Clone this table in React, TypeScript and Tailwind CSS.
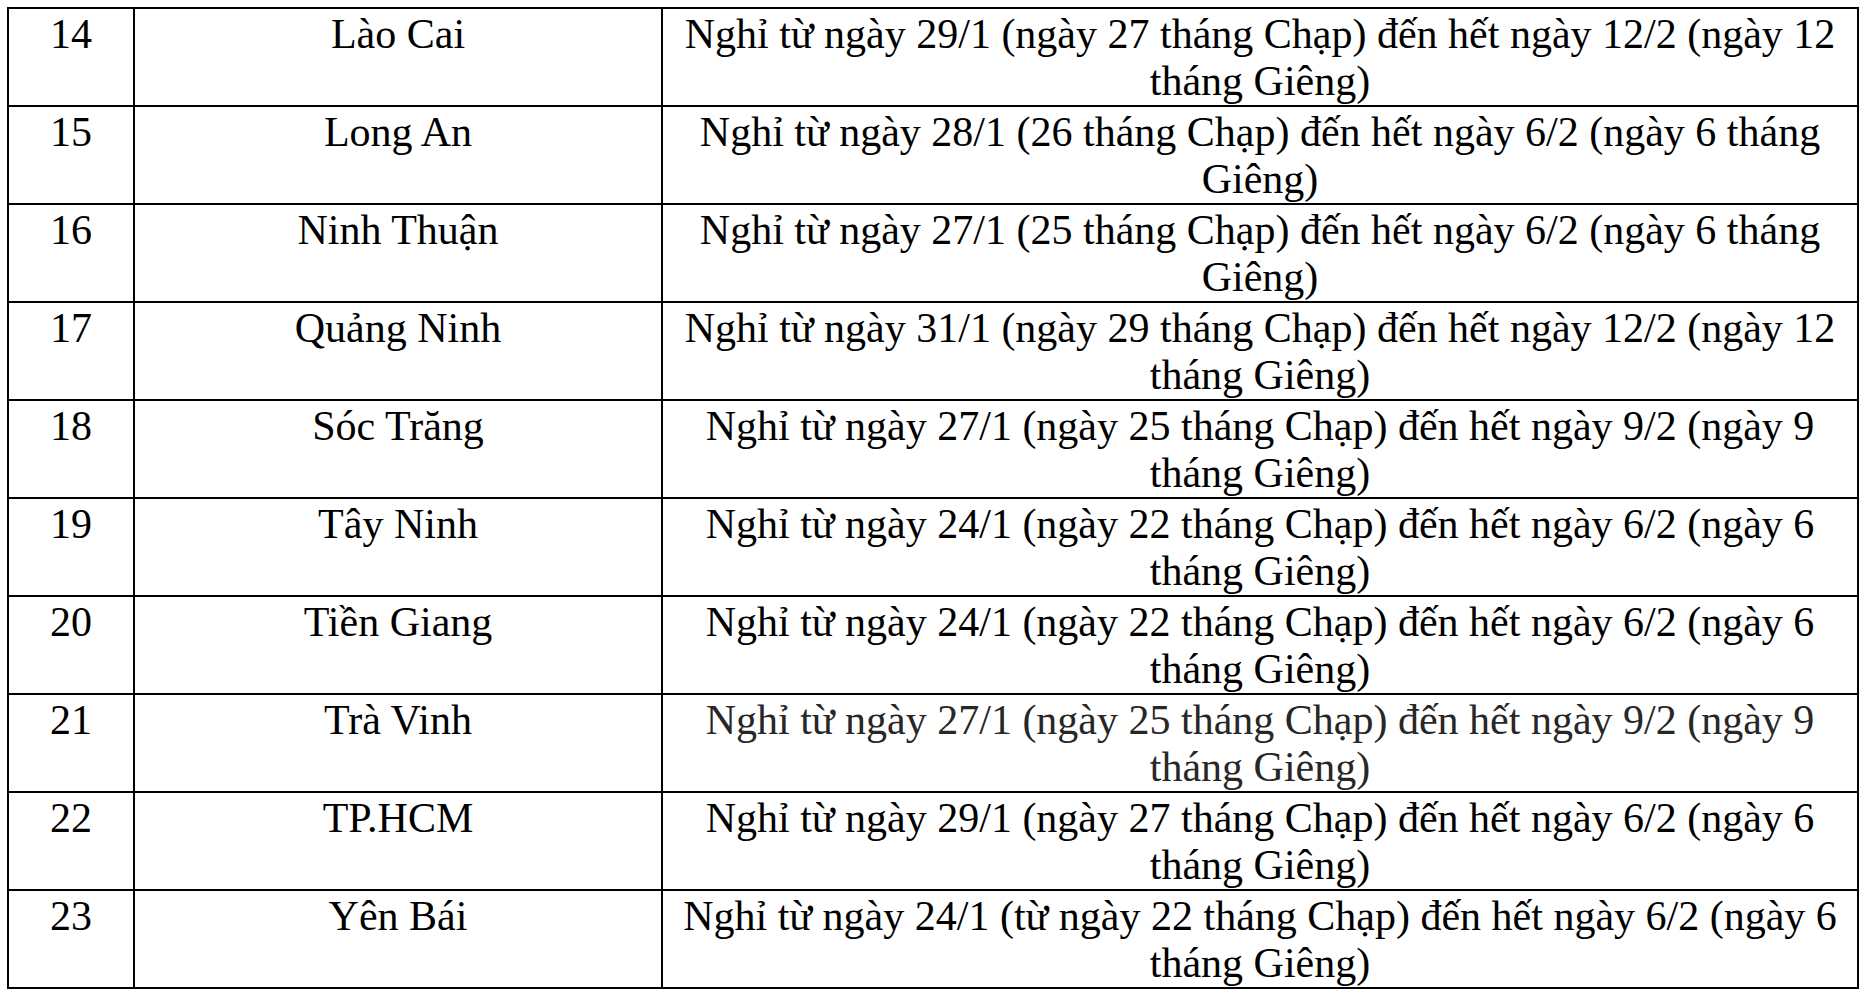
const rows: { no: number; province: string; lines: [string, string]; muted?: boolean }[] = [
  { no: 14, province: "Lào Cai", lines: ["Nghỉ từ ngày 29/1 (ngày 27 tháng Chạp) đến hết ngày 12/2 (ngày 12", "tháng Giêng)"] },
  { no: 15, province: "Long An", lines: ["Nghỉ từ ngày 28/1 (26 tháng Chạp) đến hết ngày 6/2 (ngày 6 tháng", "Giêng)"] },
  { no: 16, province: "Ninh Thuận", lines: ["Nghỉ từ ngày 27/1 (25 tháng Chạp) đến hết ngày 6/2 (ngày 6 tháng", "Giêng)"] },
  { no: 17, province: "Quảng Ninh", lines: ["Nghỉ từ ngày 31/1 (ngày 29 tháng Chạp) đến hết ngày 12/2 (ngày 12", "tháng Giêng)"] },
  { no: 18, province: "Sóc Trăng", lines: ["Nghỉ từ ngày 27/1 (ngày 25 tháng Chạp) đến hết ngày 9/2 (ngày 9", "tháng Giêng)"] },
  { no: 19, province: "Tây Ninh", lines: ["Nghỉ từ ngày 24/1 (ngày 22 tháng Chạp) đến hết ngày 6/2 (ngày 6", "tháng Giêng)"] },
  { no: 20, province: "Tiền Giang", lines: ["Nghỉ từ ngày 24/1 (ngày 22 tháng Chạp) đến hết ngày 6/2 (ngày 6", "tháng Giêng)"] },
  { no: 21, province: "Trà Vinh", lines: ["Nghỉ từ ngày 27/1 (ngày 25 tháng Chạp) đến hết ngày 9/2 (ngày 9", "tháng Giêng)"], muted: true },
  { no: 22, province: "TP.HCM", lines: ["Nghỉ từ ngày 29/1 (ngày 27 tháng Chạp) đến hết ngày 6/2 (ngày 6", "tháng Giêng)"] },
  { no: 23, province: "Yên Bái", lines: ["Nghỉ từ ngày 24/1 (từ ngày 22 tháng Chạp) đến hết ngày 6/2 (ngày 6", "tháng Giêng)"] },
];

export default function App() {
  return (
    <div className="min-h-screen bg-white pl-[7px] pt-[7px] font-['Liberation_Serif','Times_New_Roman',serif] text-[42px] leading-[47px] text-black">
      <table className="w-[1852px] table-fixed border-collapse">
        <colgroup>
          <col className="w-[126px]" />
          <col className="w-[528px]" />
          <col />
        </colgroup>
        <tbody>
          {rows.map((row) => (
            <tr key={row.no} className="h-[98px]">
              <td className="border-2 border-black p-0 pt-[2px] text-center align-top">{row.no}</td>
              <td className="border-2 border-black p-0 pt-[2px] text-center align-top">{row.province}</td>
              <td
                className={`border-2 border-black p-0 pt-[2px] text-center align-top ${
                  row.muted ? "text-[#272727]" : ""
                }`}
              >
                <span className="block whitespace-nowrap">{row.lines[0]}</span>
                <span className="block whitespace-nowrap">{row.lines[1]}</span>
              </td>
            </tr>
          ))}
        </tbody>
      </table>
    </div>
  );
}
